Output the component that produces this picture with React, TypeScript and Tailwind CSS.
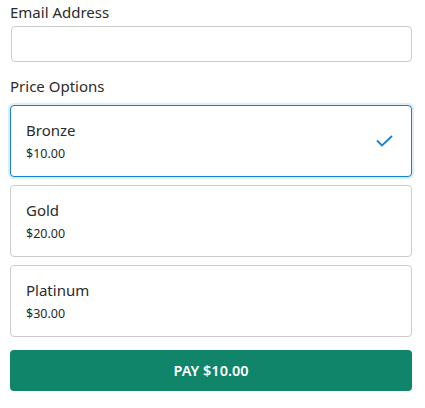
import { useState } from "react";

type PriceOption = {
  id: string;
  name: string;
  price: number;
};

const options: PriceOption[] = [
  { id: "bronze", name: "Bronze", price: 10 },
  { id: "gold", name: "Gold", price: 20 },
  { id: "platinum", name: "Platinum", price: 30 },
];

function formatPrice(value: number) {
  return `$${value.toFixed(2)}`;
}

export default function App() {
  const [email, setEmail] = useState("");
  const [selected, setSelected] = useState("bronze");
  const current = options.find((o) => o.id === selected) ?? options[0];

  return (
    <div
      className="ml-[10px] w-[402px] bg-white text-[#2b2b2b]"
      style={{ fontFamily: '"Noto Sans", "Open Sans", sans-serif' }}
    >
      <label htmlFor="email" className="block pt-[2px] text-[15px] leading-[21px]">
        Email Address
      </label>
      <input
        id="email"
        type="email"
        value={email}
        onChange={(e) => setEmail(e.target.value)}
        className="mt-[3px] ml-[1px] block h-[36px] w-[401px] rounded-[4px] border border-[#cccccc] px-3 text-sm outline-none"
      />

      <p className="mt-[14px] text-[15px] leading-[21px]">Price Options</p>

      <div className="mt-[8px] flex flex-col gap-[8px]">
        {options.map((option) => {
          const isActive = option.id === selected;
          return (
            <button
              key={option.id}
              type="button"
              onClick={() => setSelected(option.id)}
              className={
                isActive
                  ? "flex h-[72px] items-center justify-between rounded-[4px] border border-[#1580d0] bg-white pr-[18px] pl-[15px] text-left shadow-[0_0_0_2px_rgba(21,128,208,0.15)]"
                  : "flex h-[72px] items-center justify-between rounded-[4px] border border-[#cccccc] bg-white pr-[18px] pl-[15px] text-left"
              }
            >
              <span className="block">
                <span className="block text-[15px] leading-[20px] text-[#2b2b2b]">
                  {option.name}
                </span>
                <span className="mt-[6px] block text-[12.5px] leading-[16px] text-[#2b2b2b]">
                  {formatPrice(option.price)}
                </span>
              </span>
              {isActive ? (
                <svg width="17" height="12" viewBox="0 0 17 12" fill="none" aria-hidden="true">
                  <path d="M1 5.5L6 10.5L16 1" stroke="#1a80d6" strokeWidth="1.8" />
                </svg>
              ) : null}
            </button>
          );
        })}
      </div>

      <button
        type="button"
        className="mt-[13px] flex h-[41px] w-full items-center justify-center rounded-[4px] bg-[#10856a] text-[14.5px] font-semibold text-white"
      >
        PAY {formatPrice(current.price)}
      </button>
    </div>
  );
}
